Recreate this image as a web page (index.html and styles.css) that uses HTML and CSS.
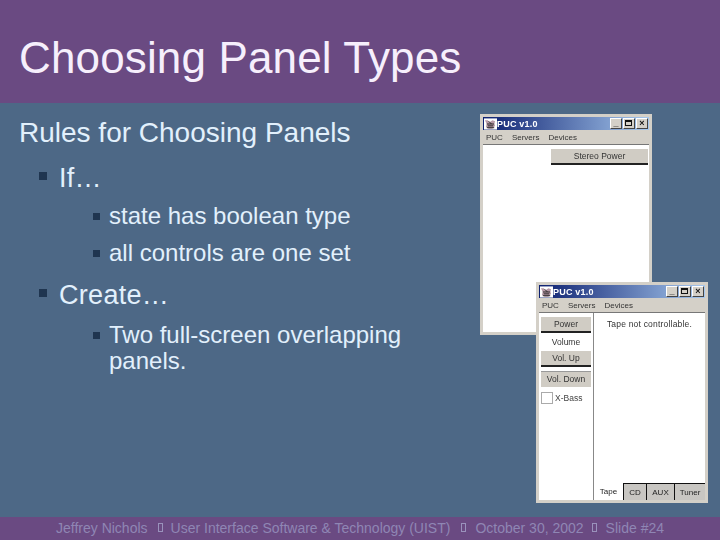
FILE: index.html
```html
<!DOCTYPE html>
<html lang="en">
<head>
<meta charset="utf-8">
<title>Choosing Panel Types</title>
<link rel="stylesheet" href="styles.css">
</head>
<body>
<div class="slide">
  <header class="head"><h1>Choosing Panel Types</h1></header>
  <main class="content">
    <h2>Rules for Choosing Panels</h2>
    <div class="l1"><i class="b1"></i><span>If…</span></div>
    <div class="l2 first"><i class="b2"></i><span>state has boolean type</span></div>
    <div class="l2 second"><i class="b2"></i><span>all controls are one set</span></div>
    <div class="l1 create"><i class="b1"></i><span>Create…</span></div>
    <div class="l2 wrap"><i class="b2"></i><span>Two full-screen overlapping<br>panels.</span></div>
  </main>

  <section class="win win-a">
    <div class="titlebar">
      <svg class="appicon" viewBox="0 0 14 12"><rect width="14" height="12" fill="#fff"/><path d="M1 2h3l2 2 3-2 3 1-1 3 1 2-3 3H5L2 9 3 6z" fill="#b89aa8"/><path d="M3 6h8M4 8h6M5 3l3 3M3 10h8" stroke="#222" fill="none"/></svg>
      <span class="wtitle">PUC v1.0</span>
      <span class="wbtns"><b class="wb">_</b><b class="wb wb-max"><u></u></b><b class="wb wb-x">×</b></span>
    </div>
    <div class="menu"><span>PUC</span><span>Servers</span><span>Devices</span></div>
    <div class="pane pane-a"><div class="btn stereo">Stereo Power</div></div>
  </section>

  <section class="win win-b">
    <div class="titlebar">
      <svg class="appicon" viewBox="0 0 14 12"><rect width="14" height="12" fill="#fff"/><path d="M1 2h3l2 2 3-2 3 1-1 3 1 2-3 3H5L2 9 3 6z" fill="#b89aa8"/><path d="M3 6h8M4 8h6M5 3l3 3M3 10h8" stroke="#222" fill="none"/></svg>
      <span class="wtitle">PUC v1.0</span>
      <span class="wbtns"><b class="wb">_</b><b class="wb wb-max"><u></u></b><b class="wb wb-x">×</b></span>
    </div>
    <div class="menu"><span>PUC</span><span>Servers</span><span>Devices</span></div>
    <div class="pane pane-b">
      <div class="side">
        <div class="btn sb">Power</div>
        <div class="vol">Volume</div>
        <div class="btn sb">Vol. Up</div>
        <div class="btn sb down">Vol. Down</div>
        <div class="check"><i></i><span>X-Bass</span></div>
      </div>
      <div class="main">
        <div class="note">Tape not controllable.</div>
        <div class="tabs"><span class="tab on">Tape</span><span class="tab cd">CD</span><span class="tab aux">AUX</span><span class="tab tuner">Tuner</span></div>
      </div>
    </div>
  </section>

  <footer class="foot"><span>Jeffrey Nichols</span><i></i><span>User Interface Software &amp; Technology (UIST)</span><i class="wide"></i><span>October 30, 2002</span><i class="last"></i><span>Slide #24</span></footer>
</div>
</body>
</html>
```
FILE: styles.css
```css
* { box-sizing: border-box; }
html, body { margin: 0; padding: 0; }
.slide {
  position: relative;
  width: 720px;
  height: 540px;
  overflow: hidden;
  display: flex;
  flex-direction: column;
  background: #4d6886;
  font-family: "Liberation Sans", Arial, sans-serif;
  color: #e2f0fc;
}
.head {
  height: 103px;
  flex: none;
  background: #6a4a82;
  padding: 34px 0 0 19px;
}
h1 {
  margin: 0;
  font-size: 44px;
  line-height: 48px;
  font-weight: 400;
  letter-spacing: 0.15px;
  color: #f6effc;
}
.content { flex: 1; padding: 15px 0 0 19px; }
h2 {
  margin: 0;
  font-size: 28px;
  line-height: 30px;
  font-weight: 400;
}
.l1, .l2 { display: flex; }
.l1 { font-size: 27px; line-height: 30px; margin-top: 15px; padding-left: 20px; letter-spacing: 0.3px; }
.l2 { font-size: 24px; line-height: 26px; padding-left: 74px; }
.first { margin-top: 10px; }
.second { margin-top: 11px; }
.create { margin-top: 14px; }
.wrap { margin-top: 12px; }
.b1 { width: 8px; height: 8px; background: #1f3550; margin: 9px 12px 0 0; flex: none; }
.b2 { width: 7px; height: 7px; background: #1f3550; margin: 10px 9px 0 0; flex: none; }

.win {
  position: absolute;
  width: 172px;
  height: 221px;
  background: #d4d0c8;
  border: 3px solid #d4d0c8;
  display: flex;
  flex-direction: column;
  font-family: "Liberation Sans", Arial, sans-serif;
  color: #222;
  filter: blur(0.3px);
}
.win-a { left: 480px; top: 114px; }
.win-b { left: 536px; top: 282px; }
.titlebar {
  height: 13px;
  flex: none;
  display: flex;
  align-items: center;
  padding: 0 1px;
  background: linear-gradient(90deg, #0d2070, #a6c8ee);
  color: #fff;
}
.appicon { width: 13px; height: 12px; flex: none; }
.wtitle { font-size: 9px; font-weight: 700; letter-spacing: 0.2px; }
.wbtns { margin-left: auto; display: flex; gap: 1px; }
.wb {
  width: 12px;
  height: 11px;
  background: #d4d0c8;
  border: 1px solid;
  border-color: #fff #444 #444 #fff;
  color: #111;
  font-size: 9px;
  line-height: 8px;
  text-align: center;
  font-weight: 700;
}
.wb u { display: block; width: 7px; height: 6px; border: 1px solid #111; border-top-width: 2px; margin: 1px 0 0 1px; }
.menu {
  height: 15px;
  flex: none;
  display: flex;
  gap: 9px;
  align-items: center;
  padding: 0 3px;
  font-size: 8px;
  color: #333;
  border-bottom: 1px solid #777;
}
.pane { flex: 1; background: #fff; min-height: 0; }
.pane-a { padding: 4px 1px 0 68px; }
.btn {
  background: #d0ccc4;
  border-bottom: 2px solid #222;
  text-align: center;
  font-size: 8.5px;
  color: #333;
}
.stereo { height: 16px; line-height: 15px; }
.pane-b { display: flex; }
.side {
  width: 55px;
  flex: none;
  padding: 4px 2px 0 2px;
  border-right: 1px solid #888;
}
.sb { height: 16px; line-height: 15px; }
.vol { font-size: 8.5px; line-height: 17px; padding-top: 1px; text-align: center; color: #333; }
.down { margin-top: 4px; border-bottom-width: 0; border-top: 1px solid #999; }
.check { display: flex; align-items: center; gap: 2px; margin-top: 5px; font-size: 8.5px; color: #444; }
.check i { width: 12px; height: 12px; border: 1px solid #aaa; flex: none; }
.main { flex: 1; display: flex; flex-direction: column; }
.note { font-size: 8.5px; letter-spacing: 0.2px; text-align: center; padding-top: 6px; color: #333; white-space: nowrap; }
.tabs { margin-top: auto; display: flex; height: 17px; align-items: stretch; font-size: 8px; }
.tab {
  flex: 0 0 23px;
  text-align: center;
  line-height: 17px;
  background: #c8c6c2;
  border-top: 1px solid #111;
  border-left: 1px solid #111;
}
.tab.on { flex: 0 0 29px; background: #fff; border: 0; }
.tab.aux { flex-basis: 28px; }
.tab.tuner { flex: 1 0 30px; }

.foot {
  flex: none;
  height: 23px;
  background: #6a4a82;
  display: flex;
  align-items: center;
  padding: 0 0 2px 56px;
  font-size: 14px;
  color: #8f86b4;
  white-space: nowrap;
}
.foot i { width: 5px; height: 9px; border: 1px solid #9a92bc; margin: 0 8px 0 10px; flex: none; }
.foot i.wide { margin: 0 9px 0 11px; }
.foot i.last { margin: 0 9px 0 8px; }
```
